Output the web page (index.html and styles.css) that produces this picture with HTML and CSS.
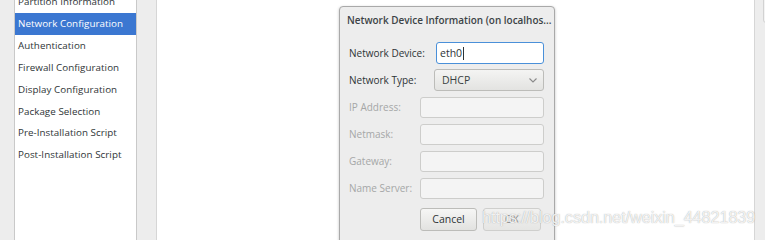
FILE: index.html
```html
<!DOCTYPE html>
<html>
<head>
<meta charset="utf-8">
<link rel="stylesheet" href="styles.css">
</head>
<body>
<div class="app">
  <div class="gutter-left"></div>
  <ul class="sidebar">
    <li class="item">Partition Information</li>
    <li class="item selected">Network Configuration</li>
    <li class="item">Authentication</li>
    <li class="item">Firewall Configuration</li>
    <li class="item">Display Configuration</li>
    <li class="item">Package Selection</li>
    <li class="item">Pre-Installation Script</li>
    <li class="item">Post-Installation Script</li>
  </ul>
  <div class="gap"></div>
  <div class="main"></div>
  <div class="gutter-right"><div class="edge-btn"></div></div>
</div>

<div class="dialog">
  <div class="dialog-title">Network Device Information (on localhos...</div>
  <div class="form">
    <div class="row">
      <span class="label">Network Device:</span>
      <div class="field short focused">eth0<span class="caret"></span></div>
    </div>
    <div class="row">
      <span class="label">Network Type:</span>
      <div class="field short combo">DHCP
        <svg class="chev" width="8" height="5" viewBox="0 0 8 5"><path d="M0.5 0.5 L4 4 L7.5 0.5" fill="none" stroke="#8a8a8a" stroke-width="1.1"/></svg>
      </div>
    </div>
    <div class="row">
      <span class="label dim">IP Address:</span>
      <div class="field wide disabled"></div>
    </div>
    <div class="row">
      <span class="label dim">Netmask:</span>
      <div class="field wide disabled"></div>
    </div>
    <div class="row">
      <span class="label dim">Gateway:</span>
      <div class="field wide disabled"></div>
    </div>
    <div class="row">
      <span class="label dim">Name Server:</span>
      <div class="field wide disabled"></div>
    </div>
    <div class="buttons">
      <div class="btn cancel">Cancel</div>
      <div class="btn ok">OK</div>
    </div>
  </div>
</div>

<div class="watermark">https://blog.csdn.net/weixin_44821839</div>
</body>
</html>
```

FILE: styles.css
```css
html, body {
  margin: 0;
  padding: 0;
  height: 240px;
  overflow: hidden;
  background: #ededed;
  font-family: "Open Sans", "Noto Sans", sans-serif;
}

.app {
  display: flex;
  height: 240px;
}

.gutter-left {
  width: 14px;
  flex: none;
}

.sidebar {
  list-style: none;
  margin: 0;
  padding: 0;
  width: 121px;
  flex: none;
  background: #ffffff;
  border-left: 1px solid #c9c9c9;
  border-right: 1px solid #c9c9c9;
  overflow: hidden;
}

.item {
  height: 21.85px;
  line-height: 21.85px;
  padding-left: 3px;
  font-size: 9.8px;
  letter-spacing: 0.05px;
  color: #2e3436;
  white-space: nowrap;
}

.item:first-child {
  margin-top: -8.6px;
}

.item.selected {
  background: #3b77d1;
  color: #ffffff;
}

.gap {
  width: 19px;
  flex: none;
}

.main {
  width: 597px;
  flex: none;
  background: #ffffff;
  border-left: 1px solid #d6d6d6;
  border-right: 1px solid #d6d6d6;
}

.gutter-right {
  flex: 1;
  position: relative;
}

.edge-btn {
  position: absolute;
  left: 8px;
  top: -3px;
  width: 8px;
  height: 24px;
  border: 1px solid #d2d2d2;
  border-radius: 3px;
  background: #f3f3f3;
}

.dialog {
  position: absolute;
  left: 339px;
  top: 6px;
  width: 214px;
  height: 240px;
  background: #ededed;
  border: 1px solid #a9a9a9;
  border-radius: 4px 4px 0 0;
  box-shadow: 0 1px 3px rgba(0,0,0,0.25);
}

.dialog-title {
  padding: 5px 0 0 7px;
  font-size: 9.95px;
  font-weight: 600;
  color: #3c4346;
  white-space: nowrap;
  height: 16px;
  line-height: 16px;
}

.form {
  padding: 14px 10px 0 9px;
  display: flex;
  flex-direction: column;
  gap: 5px;
}

.row {
  display: flex;
  align-items: center;
  height: 22px;
}

.label {
  font-size: 10px;
  color: #2e3436;
  white-space: nowrap;
}

.label.dim {
  color: #a5a7a7;
}

.field {
  margin-left: auto;
  height: 20px;
  box-sizing: content-box;
  border: 1px solid #c0c0bd;
  border-radius: 3px;
  background: #ffffff;
  font-size: 10.5px;
  color: #2e3436;
  display: flex;
  align-items: center;
  padding: 0 5px;
}

.field.short {
  width: 98px;
}

.field.wide {
  width: 112px;
  height: 19px;
}

.field.focused {
  border-color: #4a90d9;
  padding-left: 3px;
}

.caret {
  display: inline-block;
  width: 1px;
  height: 13px;
  background: #2e3436;
  margin-left: 1px;
}

.field.combo {
  background: linear-gradient(#f4f4f3, #e3e3e1);
  border-color: #bcbcb9;
  color: #3a3f41;
  padding-left: 7px;
  padding-right: 6px;
  width: 95px;
}

.chev {
  margin-left: auto;
}

.field.disabled {
  background: #f4f4f4;
  border-color: #cdcdcb;
}

.buttons {
  display: flex;
  gap: 6px;
  padding-left: 71px;
  margin-top: 4px;
}

.btn {
  height: 21px;
  line-height: 21px;
  border: 1px solid #bcbcb9;
  border-radius: 3px;
  background: linear-gradient(#f6f6f5, #e2e2e0);
  font-size: 10.5px;
  color: #2e3436;
  text-align: center;
}

.btn.cancel {
  width: 55px;
}

.btn.ok {
  width: 56px;
  color: #8f9191;
  background: linear-gradient(#f1f1f0, #e6e6e4);
  border-color: #cfcfcd;
}

.watermark {
  position: absolute;
  left: 482px;
  top: 208px;
  font-family: "Liberation Sans", Arial, sans-serif;
  font-size: 16.3px;
  color: rgba(255,255,255,0.85);
  text-shadow: 0 0 1px rgba(120,120,120,0.7);
  white-space: nowrap;
  letter-spacing: -0.1px;
}
```
